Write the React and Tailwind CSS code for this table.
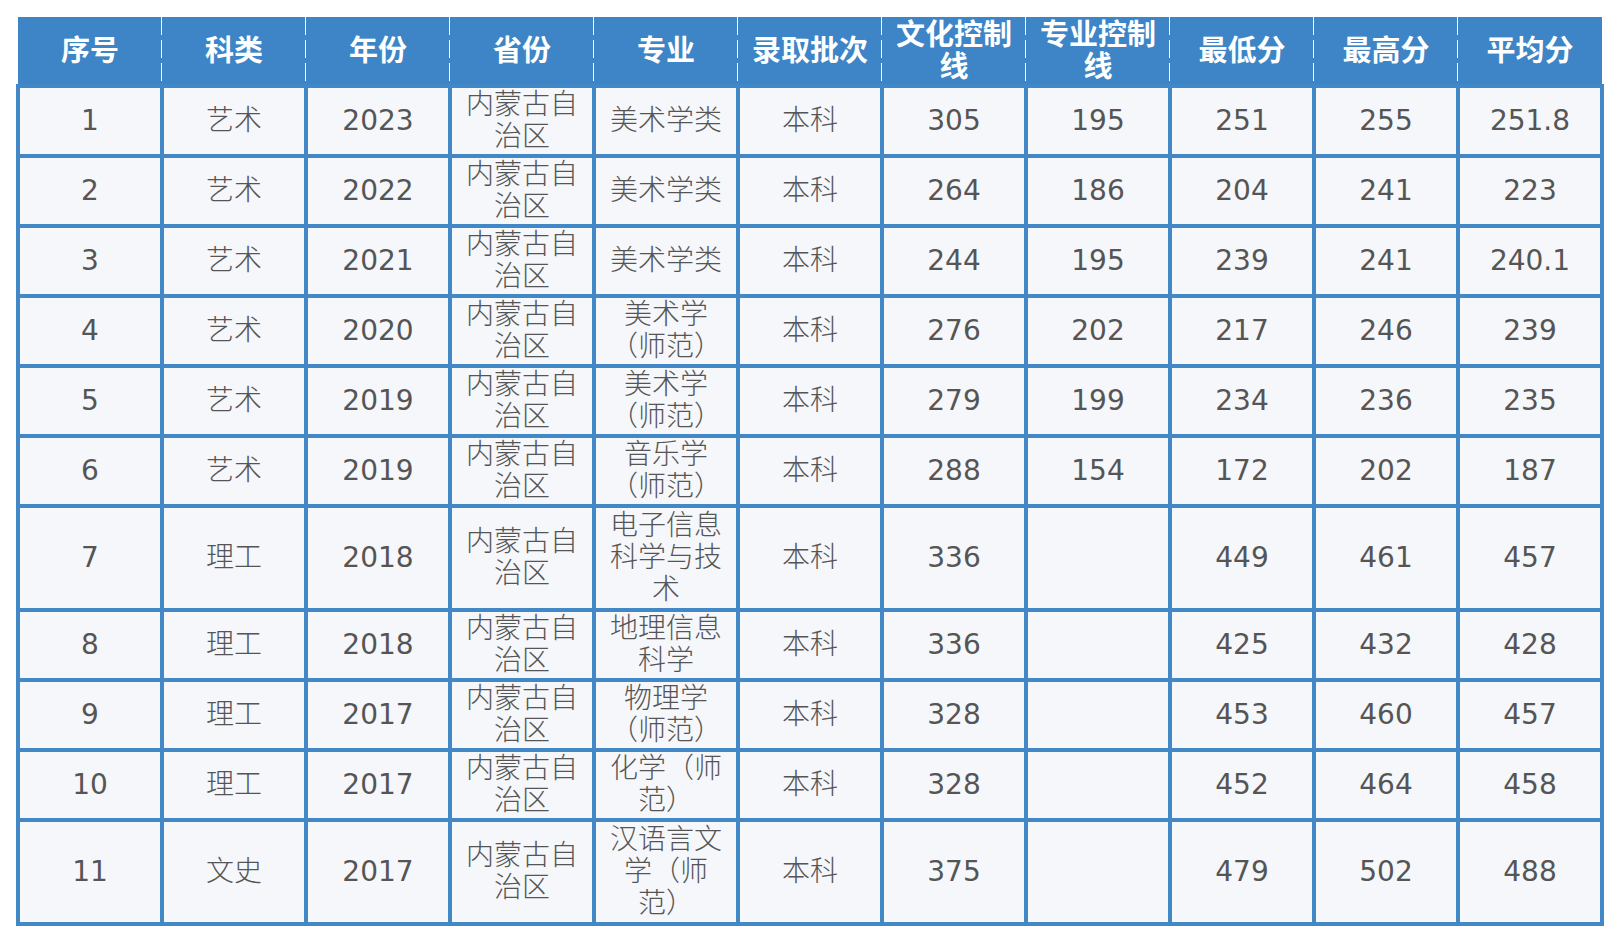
import React from 'react'

const headers = ['序号', '科类', '年份', '省份', '专业', '录取批次', '文化控制线', '专业控制线', '最低分', '最高分', '平均分']

const rows = [
  ['1', '艺术', '2023', '内蒙古自治区', '美术学类', '本科', '305', '195', '251', '255', '251.8'],
  ['2', '艺术', '2022', '内蒙古自治区', '美术学类', '本科', '264', '186', '204', '241', '223'],
  ['3', '艺术', '2021', '内蒙古自治区', '美术学类', '本科', '244', '195', '239', '241', '240.1'],
  ['4', '艺术', '2020', '内蒙古自治区', '美术学（师范）', '本科', '276', '202', '217', '246', '239'],
  ['5', '艺术', '2019', '内蒙古自治区', '美术学（师范）', '本科', '279', '199', '234', '236', '235'],
  ['6', '艺术', '2019', '内蒙古自治区', '音乐学（师范）', '本科', '288', '154', '172', '202', '187'],
  ['7', '理工', '2018', '内蒙古自治区', '电子信息科学与技术', '本科', '336', '', '449', '461', '457'],
  ['8', '理工', '2018', '内蒙古自治区', '地理信息科学', '本科', '336', '', '425', '432', '428'],
  ['9', '理工', '2017', '内蒙古自治区', '物理学（师范）', '本科', '328', '', '453', '460', '457'],
  ['10', '理工', '2017', '内蒙古自治区', '化学（师范）', '本科', '328', '', '452', '464', '458'],
  ['11', '文史', '2017', '内蒙古自治区', '汉语言文学（师范）', '本科', '375', '', '479', '502', '488'],
]

const isNum = (s) => /^[\d.]*$/.test(s)

const App = () => {
  return (
    <div className="min-h-[940px] bg-white pt-[17px] pl-[16px] font-['DejaVu_Sans','Noto_Sans_CJK_SC',sans-serif]">
      <table className="table-fixed border-collapse w-[1584px]">
        <thead>
          <tr>
            {headers.map((h, i) => (
              <th
                key={h}
                className={
                  'relative w-[144px] h-[69px] bg-[#3d85c6] text-white text-[29px] leading-[32px] font-bold px-[10px] py-0 align-middle text-center ' +
                  (i < headers.length - 1
                    ? "after:content-[''] after:absolute after:right-[-2px] after:top-0 after:bottom-0 after:w-[3px] after:bg-[repeating-linear-gradient(to_bottom,white_0_18px,transparent_18px_23px)]"
                    : '')
                }
              >
                {h}
              </th>
            ))}
          </tr>
        </thead>
        <tbody>
          {rows.map((r) => {
            const tall = r[4].length > 8
            return (
              <tr key={r[0]}>
                {r.map((c, i) => (
                  <td
                    key={i}
                    className={
                      'border-4 border-[#4287c6] bg-[#f5f7fa] text-[#555] text-[28px] leading-[32px] px-[10px] text-center align-middle ' +
                      (tall ? 'py-[2px] ' : 'py-px ') +
                      (isNum(c) ? 'font-normal' : 'font-light text-[#5a5a5a]')
                    }
                  >
                    {c}
                  </td>
                ))}
              </tr>
            )
          })}
        </tbody>
      </table>
    </div>
  )
}

export default App
